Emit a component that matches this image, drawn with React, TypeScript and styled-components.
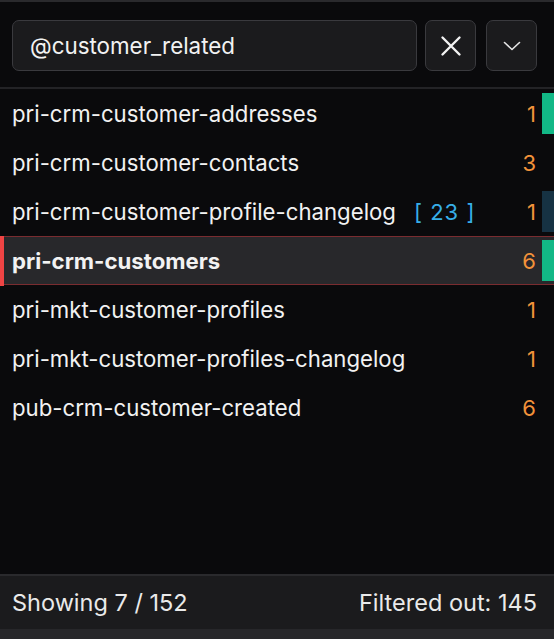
import React from "react";
import styled, { createGlobalStyle } from "styled-components";

type Topic = {
  name: string;
  count: number;
  tag?: number;
  bar?: "green" | "blue";
  selected?: boolean;
};

const topics: Topic[] = [
  { name: "pri-crm-customer-addresses", count: 1, bar: "green" },
  { name: "pri-crm-customer-contacts", count: 3 },
  { name: "pri-crm-customer-profile-changelog", count: 1, tag: 23, bar: "blue" },
  { name: "pri-crm-customers", count: 6, bar: "green", selected: true },
  { name: "pri-mkt-customer-profiles", count: 1 },
  { name: "pri-mkt-customer-profiles-changelog", count: 1 },
  { name: "pub-crm-customer-created", count: 6 },
];

const barColors = {
  green: "#12b886",
  blue: "#163243",
};

export default function App() {
  const [query, setQuery] = React.useState("@customer_related");

  return (
    <>
      <GlobalStyle />
      <Panel>
        <Header>
          <SearchInput value={query} onChange={(e) => setQuery(e.target.value)} />
          <IconButton onClick={() => setQuery("")}>
            <svg width="24" height="24" viewBox="0 0 24 24" fill="none">
              <path
                d="M3.5 3.5L20.5 20.5M20.5 3.5L3.5 20.5"
                stroke="#f2f2f2"
                strokeWidth="2.4"
                strokeLinecap="round"
              />
            </svg>
          </IconButton>
          <IconButton>
            <svg width="18" height="18" viewBox="0 0 18 18" fill="none">
              <path
                d="M1.5 5.5L9 12.5L16.5 5.5"
                stroke="#e6e6e6"
                strokeWidth="1.6"
                strokeLinecap="round"
                strokeLinejoin="round"
              />
            </svg>
          </IconButton>
        </Header>

        <List>
          {topics.map((t) => (
            <Row key={t.name} selected={!!t.selected}>
              <Name selected={!!t.selected}>{t.name}</Name>
              {t.tag !== undefined && <Tag>[ {t.tag} ]</Tag>}
              <Count>{t.count}</Count>
              <Bar color={t.bar ? barColors[t.bar] : "transparent"} />
            </Row>
          ))}
        </List>

        <Footer>
          <span>Showing 7 / 152</span>
          <span>Filtered out: 145</span>
        </Footer>
        <BottomStrip />
      </Panel>
    </>
  );
}

const GlobalStyle = createGlobalStyle`
  html, body {
    margin: 0;
    padding: 0;
    background: #0a0a0c;
  }
  body {
    font-family: Inter, "Noto Sans", sans-serif;
    color: #f0f0f0;
  }
`;

const Panel = styled.div`
  width: 554px;
  height: 639px;
  display: flex;
  flex-direction: column;
  border-top: 2px solid #2a2a2d;
  box-sizing: border-box;
  background: #0a0a0c;
`;

const Header = styled.div`
  display: flex;
  align-items: center;
  gap: 8px;
  padding: 18px 17px 16px 12px;
  border-bottom: 2px solid #232326;
`;

const SearchInput = styled.input`
  flex: 1;
  min-width: 0;
  height: 51px;
  box-sizing: border-box;
  background: #1b1b1d;
  border: 1.5px solid #3a3a3e;
  border-radius: 7px;
  padding: 0 17px;
  font-family: inherit;
  font-size: 22.4px;
  color: #f2f2f2;
  outline: none;
`;

const IconButton = styled.button`
  width: 51px;
  height: 51px;
  flex-shrink: 0;
  display: flex;
  align-items: center;
  justify-content: center;
  background: #1b1b1d;
  border: 1.5px solid #3a3a3e;
  border-radius: 7px;
  padding: 0;
  cursor: pointer;

  & + & {
    margin-left: 2px;
  }
`;

const List = styled.div`
  flex: 1;
  display: flex;
  flex-direction: column;
`;

const Row = styled.div<{ selected: boolean }>`
  height: 49px;
  box-sizing: border-box;
  display: flex;
  align-items: center;
  padding-left: 12px;
  position: relative;
  background: ${(p) => (p.selected ? "#28282b" : "transparent")};
  border-top: 1.5px solid ${(p) => (p.selected ? "#7a2c30" : "transparent")};
  border-bottom: 1.5px solid ${(p) => (p.selected ? "#7a2c30" : "transparent")};

  &::before {
    content: "";
    position: absolute;
    left: 0;
    top: -1.5px;
    bottom: -1.5px;
    width: 4px;
    background: ${(p) => (p.selected ? "#ef4444" : "transparent")};
  }
`;

const Name = styled.span<{ selected: boolean }>`
  font-size: 22.2px;
  font-weight: ${(p) => (p.selected ? 700 : 400)};
  color: #f2f2f2;
  white-space: nowrap;
`;

const Tag = styled.span`
  margin-left: 18px;
  font-size: 22px;
  letter-spacing: 1px;
  color: #37aee8;
  white-space: nowrap;
`;

const Count = styled.span`
  margin-left: auto;
  margin-right: 6px;
  font-size: 22px;
  color: #f2923a;
`;

const Bar = styled.div<{ color: string }>`
  width: 12px;
  align-self: stretch;
  margin: 3px 0;
  background: ${(p) => p.color};
`;

const Footer = styled.div`
  height: 55px;
  box-sizing: border-box;
  display: flex;
  align-items: center;
  justify-content: space-between;
  padding: 0 17px 0 12px;
  background: #1b1b1d;
  border-top: 2px solid #2a2a2d;
  font-size: 23.5px;
  color: #eaeaea;
`;

const BottomStrip = styled.div`
  height: 10px;
  background: #27272a;
`;
